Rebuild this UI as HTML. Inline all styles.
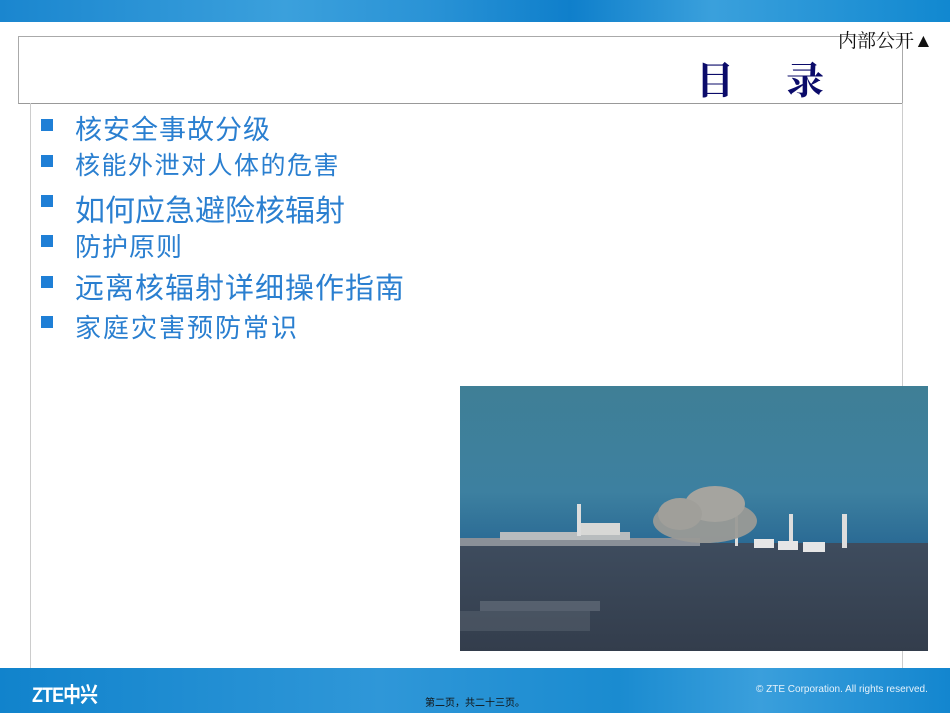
<!DOCTYPE html>
<html><head><meta charset="utf-8"><style>
body{margin:0;width:950px;height:713px;position:relative;overflow:hidden;background:#fff;font-family:"Liberation Sans","Noto Sans CJK SC",sans-serif}
.top{position:absolute;left:0;top:0;width:950px;height:22px;background:linear-gradient(90deg,#1a86cf 0%,#3ba0dc 30%,#2a93d6 45%,#0f7fcb 60%,#3aa0dc 75%,#1188d0 100%)}
.bot{position:absolute;left:0;top:668px;width:950px;height:45px;background:linear-gradient(90deg,#1183cc,#2f97d8 40%,#1a8bd0 65%,#3a9fdc 80%,#1386cf)}
.tbox{position:absolute;left:18px;top:36px;width:883px;height:66px;border:1px solid #aaa;border-bottom:1px solid #999}
.cbox{position:absolute;left:30px;top:103px;width:871px;height:565px;border-left:1px solid #ccc;border-right:1px solid #ccc}
.title{position:absolute;left:696px;top:50px;font-size:38px;color:#0b0b6a;font-family:"Liberation Serif","Noto Serif CJK SC",serif;font-weight:bold;letter-spacing:52px}
.tag{position:absolute;left:838px;top:26px;font-size:19px;color:#111;font-family:"Liberation Serif","Noto Serif CJK SC",serif}
.li{position:absolute;left:75px;color:#2a7fd0;white-space:nowrap}
.b{position:absolute;left:41px;width:12px;height:12px;background:#1f7fd6}
</style></head><body>
<div class="top"></div>
<div class="tbox"></div>
<div class="cbox"></div>
<div class="title">目录</div>
<div class="tag">内部公开▲</div>
<div class="b" style="top:119px"></div><div class="li" style="top:108px;font-size:27px;letter-spacing:1px">核安全事故分级</div>
<div class="b" style="top:155px"></div><div class="li" style="top:146px;font-size:25px;letter-spacing:1.5px">核能外泄对人体的危害</div>
<div class="b" style="top:195px"></div><div class="li" style="top:186px;font-size:30px;letter-spacing:0px">如何应急避险核辐射</div>
<div class="b" style="top:235px"></div><div class="li" style="top:227px;font-size:26px;letter-spacing:1px">防护原则</div>
<div class="b" style="top:276px"></div><div class="li" style="top:265px;font-size:29px;letter-spacing:1px">远离核辐射详细操作指南</div>
<div class="b" style="top:316px"></div><div class="li" style="top:308px;font-size:26px;letter-spacing:2px">家庭灾害预防常识</div>
<svg style="position:absolute;left:460px;top:386px" width="468" height="265">
<defs><linearGradient id="s" x1="0" y1="0" x2="0" y2="1"><stop offset="0" stop-color="#3f7f96"/><stop offset=".4" stop-color="#3d80a0"/><stop offset=".6" stop-color="#2a6a94"/></linearGradient>
<linearGradient id="g" x1="0" y1="0" x2="0" y2="1"><stop offset="0" stop-color="#3e4c5e"/><stop offset="1" stop-color="#333d4c"/></linearGradient></defs>
<rect width="468" height="265" fill="url(#s)"/>
<rect y="157" width="468" height="108" fill="url(#g)"/>
<rect x="0" y="152" width="240" height="8" fill="#8a9098"/>
<rect x="40" y="146" width="130" height="8" fill="#b8bcbe"/>
<rect x="120" y="137" width="40" height="12" fill="#d8d8d6"/>
<rect x="117" y="118" width="4" height="32" fill="#ddd"/>
<rect x="275" y="130" width="3" height="30" fill="#ddd"/>
<rect x="329" y="128" width="4" height="32" fill="#ddd"/>
<rect x="382" y="128" width="5" height="34" fill="#ddd"/>
<ellipse cx="245" cy="135" rx="52" ry="22" fill="#9a9a96" opacity=".95"/>
<ellipse cx="255" cy="118" rx="30" ry="18" fill="#a5a49f"/>
<ellipse cx="220" cy="128" rx="22" ry="16" fill="#a09f9a"/>
<rect x="294" y="153" width="20" height="9" fill="#e6e6e6"/>
<rect x="318" y="155" width="20" height="9" fill="#e6e6e6"/>
<rect x="343" y="156" width="22" height="10" fill="#e6e6e6"/>
<rect x="20" y="215" width="120" height="10" fill="#6a7480" opacity=".6"/>
<rect x="0" y="225" width="130" height="20" fill="#5a6470" opacity=".5"/>
</svg>
<div class="bot"></div>
<div style="position:absolute;left:32px;top:679px;color:#fff;font-size:21px;font-weight:bold;letter-spacing:-1px;transform:scaleX(.85);transform-origin:left">ZTE中兴</div>
<div style="position:absolute;left:425px;top:694px;color:#111;font-size:10px">第二页，共二十三页。</div>
<div style="position:absolute;left:756px;top:684px;color:#e6f2fb;font-size:10px">© ZTE Corporation. All rights reserved.</div>
</body></html>
